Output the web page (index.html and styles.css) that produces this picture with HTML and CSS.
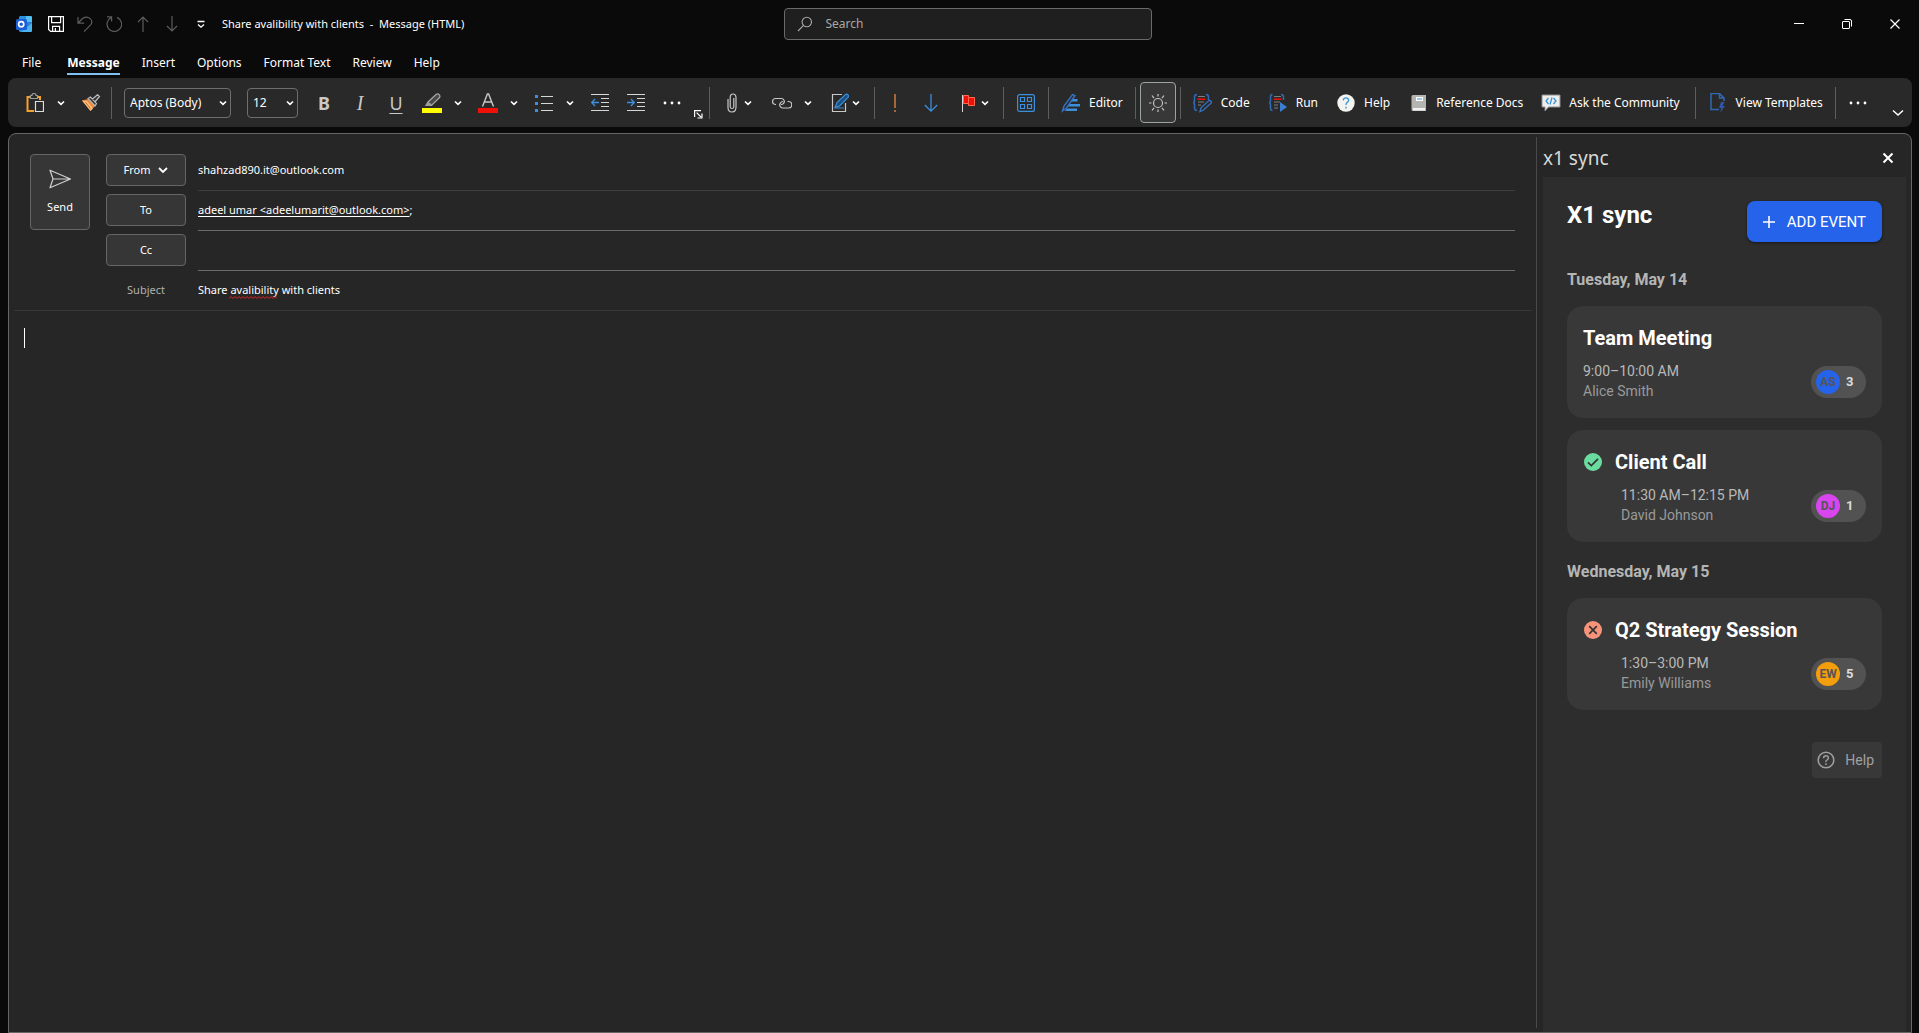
FILE: index.html
```html
<!DOCTYPE html>
<html lang="en">
<head>
<meta charset="utf-8">
<title>Share avalibility with clients - Message (HTML)</title>
<meta name="viewport" content="width=device-width, initial-scale=1">
<link rel="stylesheet" href="styles.css">
</head>
<body>
<svg class="defs" aria-hidden="true">
  <symbol id="chev" viewBox="0 0 8 8"><path d="M1 2.5 4 5.3 7 2.5" fill="none" stroke="currentColor" stroke-width="1.7"/></symbol>
  <symbol id="dots" viewBox="0 0 18 18"><g fill="currentColor"><circle cx="2" cy="9" r="1.4"/><circle cx="9" cy="9" r="1.4"/><circle cx="16" cy="9" r="1.4"/></g></symbol>
</svg>

<header class="titlebar">
  <div class="quick">
    <svg class="app-logo" width="16" height="16" viewBox="0 0 16 16"><path d="M3 1 4 0h11l1 1v14l-1 1H4l-1-1z" fill="#2b8fdc"/><path d="M10 0h5l1 1v5h-6z" fill="#50c0f5"/><path d="M10 6h6v6l-6 2z" fill="#2a7fd4"/><path d="m16 7-11 9h10l1-1z" fill="#4bb4ee"/><rect y="3" width="11" height="11" rx="1.5" fill="#1a5fd6"/><circle cx="5.2" cy="8.2" r="2.6" fill="none" stroke="#fff" stroke-width="1.6"/></svg>
    <button class="qbtn" aria-label="Save"><svg width="16" height="16" viewBox="0 0 16 16" fill="none" stroke="currentColor" stroke-width="1.2"><path d="M.6.6h14.8v14.8H2.6l-2-2zM3.6.6v6h9v-6M4.6 15.4v-5h7v5M7.4 12v3"/></svg></button>
    <button class="qbtn dim" aria-label="Undo"><svg width="16" height="16" viewBox="0 0 16 16" fill="none" stroke="currentColor" stroke-width="1.2"><path d="M1 1v6.2h6.2M1.2 7 5 3c3-3 7-2 8.600 0 1.600 2 1.400 4.500-.2 6.200L7 15.600"/></svg></button>
    <button class="qbtn dim" aria-label="Redo"><svg width="16" height="16" viewBox="0 0 16 16" fill="none" stroke="currentColor" stroke-width="1.200"><path d="M1 .8h4.600v4.600M11 1.400A7.300 7.300 0 1 1 5.200 1.600"/></svg></button>
    <button class="qbtn dim" aria-label="Previous item"><svg width="16" height="16" viewBox="0 0 16 16" fill="none" stroke="currentColor" stroke-width="1.200"><path d="M8 16V1M3 6l5-5 5 5"/></svg></button>
    <button class="qbtn dim" aria-label="Next item"><svg width="16" height="16" viewBox="0 0 16 16" fill="none" stroke="currentColor" stroke-width="1.200"><path d="M8 0v15M3 10l5 5 5-5"/></svg></button>
    <button class="qbtn" aria-label="Customize Quick Access Toolbar"><svg width="16" height="16" viewBox="0 0 16 16" fill="none" stroke="currentColor" stroke-width="1.300"><path d="M4.500 5.500h7M5 8.500l3 2.700 3-2.700"/></svg></button>
    <h1 class="doc-title">Share avalibility with clients&nbsp; -&nbsp; Message (HTML)</h1>
  </div>
  <label class="search">
    <svg width="16" height="16" viewBox="0 0 16 16" fill="none" stroke="currentColor" stroke-width="1.100"><circle cx="9.800" cy="6" r="4.700"/><path d="M6.500 9.400 1 15"/></svg>
    <input type="search" placeholder="Search" aria-label="Search">
  </label>
  <div class="window-controls">
    <button aria-label="Minimize"><svg width="12" height="12" viewBox="0 0 12 12"><path d="M1 5.500h10" stroke="currentColor"/></svg></button>
    <button aria-label="Restore"><svg width="12" height="12" viewBox="0 0 12 12" fill="none" stroke="currentColor"><rect x="1.500" y="3.500" width="7" height="7" rx=".5"/><path d="M3.500 1.500H9Q10.500 1.500 10.500 3v5.500"/></svg></button>
    <button aria-label="Close"><svg width="12" height="12" viewBox="0 0 12 12" stroke="currentColor" stroke-width="1.200"><path d="m1.500 1.500 9 9m0-9-9 9"/></svg></button>
  </div>
</header>

<nav class="tabs" aria-label="Ribbon tabs">
  <a href="#file">File</a>
  <a href="#message" class="active" aria-current="page">Message</a>
  <a href="#insert">Insert</a>
  <a href="#options">Options</a>
  <a href="#format">Format Text</a>
  <a href="#review">Review</a>
  <a href="#help">Help</a>
</nav>

<div class="ribbon" role="toolbar" aria-label="Message">
  <div class="split">
    <button class="icon" aria-label="Paste"><svg width="18" height="20" viewBox="0 0 18 20" fill="none"><path d="M5 4H1.500v14H8" stroke="#f5a22d" stroke-width="2"/><path d="M11 4h3v3" stroke="#f5a22d" stroke-width="2"/><path d="M4.500 5.500v-3H6q0-2 2-2t2 2h1.500v3z" stroke="#9a9a9a" stroke-width="1.200"/><path d="M9.500 8.500h8v10h-8z" fill="#292929" stroke="#ddd" stroke-width="1.200"/></svg></button>
    <button class="arrow" aria-label="Paste options"><svg width="8" height="8"><use href="#chev"/></svg></button>
  </div>
  <button class="icon" aria-label="Format Painter"><svg width="20" height="18" viewBox="0 0 20 18"><path d="M1 6.500 7.500 5l6.500 7-4.500 5z" fill="#f0883a"/><path d="m1 6.500 5 .5 6 7.500-2.500 2.500z" fill="#ffd9a0" opacity=".7"/><path d="m4.500 8.200 5 6.500" stroke="#d56a1c"/><path d="m7 4.500 2.500-1.500 6 6.500-1.500 2.500zM11 5.500l5.500-4.800 2 1.800-4.700 5.500" fill="#333" stroke="#bdbdbd" stroke-width="1.200"/></svg></button>
  <span class="sep"></span>
  <div class="combos">
    <span class="combo combo-font"><select aria-label="Font"><option>Aptos (Body)</option></select><svg width="8" height="8"><use href="#chev"/></svg></span>
    <span class="combo combo-size"><select aria-label="Font size"><option>12</option></select><svg width="8" height="8"><use href="#chev"/></svg></span>
  </div>
  <button class="icon glyph bold" aria-label="Bold">B</button>
  <button class="icon glyph italic" aria-label="Italic">I</button>
  <button class="icon glyph under" aria-label="Underline">U</button>
  <div class="split">
    <button class="icon" aria-label="Text highlight color"><svg width="20" height="20" viewBox="0 0 20 20"><path d="m6 9 8-7.500q2-1.200 3.300.3t0 3L9.500 12.500H4z" fill="#4a4a4a" stroke="#a8a8a8" stroke-width="1.200"/><path d="M6.500 9 3 13h5l2-1.500z" fill="#9b9b9b"/><path d="M0 15h20v5H0z" fill="#ff0"/></svg></button>
    <button class="arrow" aria-label="Highlight colors"><svg width="8" height="8"><use href="#chev"/></svg></button>
  </div>
  <div class="split">
    <button class="icon" aria-label="Font color"><svg width="20" height="20" viewBox="0 0 20 20"><path d="M4.500 13.500 9.400 1h1.200l4.900 12.500M6.400 9h7.200" fill="none" stroke="#c8c8c8" stroke-width="1.400"/><path d="M0 15h20v5H0z" fill="#f01008"/></svg></button>
    <button class="arrow" aria-label="Font colors"><svg width="8" height="8"><use href="#chev"/></svg></button>
  </div>
  <div class="split">
    <button class="icon" aria-label="Bullets"><svg width="18" height="18" viewBox="0 0 18 18"><path d="M0 1h3v3H0zm0 7h3v3H0zm0 7h3v3H0z" fill="#3b8fdc"/><path d="M6 2.500h12M6 9.500h12M6 16.500h12" stroke="#d6d6d6"/></svg></button>
    <button class="arrow" aria-label="Bullet library"><svg width="8" height="8"><use href="#chev"/></svg></button>
  </div>
  <button class="icon" aria-label="Decrease indent"><svg width="18" height="18" viewBox="0 0 18 18" fill="none"><path d="M0 .5h18M10 4.500h8M10 8.500h8M10 12.500h8M0 16.500h18" stroke="#d6d6d6"/><path d="M8 8.500H1M4 5 .7 8.500 4 12" stroke="#3b8fdc" stroke-width="1.300"/></svg></button>
  <button class="icon" aria-label="Increase indent"><svg width="18" height="18" viewBox="0 0 18 18" fill="none"><path d="M0 .5h18M10 4.500h8M10 8.500h8M10 12.500h8M0 16.500h18" stroke="#d6d6d6"/><path d="M0 8.500h7M4 5l3.300 3.500L4 12" stroke="#3b8fdc" stroke-width="1.300"/></svg></button>
  <button class="icon" aria-label="More formatting"><svg width="18" height="18"><use href="#dots"/></svg></button>
  <button class="launcher" aria-label="Text dialog"><svg width="9" height="9" viewBox="0 0 9 9" fill="none" stroke="currentColor" stroke-width="1.200"><path d="M.6 7V.6H7M2.600 2.600 7 7M8 3.500V8H3.500"/></svg></button>
  <span class="sep"></span>
  <div class="split tight">
    <button class="icon" aria-label="Attach file"><svg width="10" height="20" viewBox="0 0 10 20" fill="none" stroke="#c8c8c8" stroke-width="1.200"><path d="M6.800 5v9q-.3 1.500-1.800 1.500T3.200 14V4.500Q3.200 1 6 1t3 3.500v9.500Q9 19 5 19T1 14.500V6"/></svg></button>
    <button class="arrow" aria-label="Attach options"><svg width="8" height="8"><use href="#chev"/></svg></button>
  </div>
  <div class="split">
    <button class="icon" aria-label="Link"><svg width="20" height="12" viewBox="0 0 20 12" fill="none" stroke="#c8c8c8" stroke-width="1.200"><path d="M4 7.500H3.500a3 3 0 0 1 0-6H9a3 3 0 0 1 2.500 5Q10.700 7.500 9 7.500"/><path d="M15.500 4.500h1a3 3 0 0 1 0 6.500H11a3 3 0 0 1-2.500-5Q9.300 4.500 11 4.500"/></svg></button>
    <button class="arrow" aria-label="Link options"><svg width="8" height="8"><use href="#chev"/></svg></button>
  </div>
  <div class="split tight">
    <button class="icon" aria-label="Signature"><svg width="18" height="20" viewBox="0 0 18 20" fill="none"><path d="M11 1.500H1.500v17h13V10" stroke="#c8c8c8" stroke-width="1.200"/><path d="m4 14.500 2-5 8.500-8q1.500-.7 2.500.3t0 2.500L8.500 13z" fill="#1b4f80" stroke="#3b8fdc" stroke-width="1.200"/><path d="M4 15h9" stroke="#3b8fdc"/></svg></button>
    <button class="arrow" aria-label="Signature options"><svg width="8" height="8"><use href="#chev"/></svg></button>
  </div>
  <span class="sep"></span>
  <button class="icon" aria-label="High importance"><svg width="4" height="18" viewBox="0 0 4 18"><path d="M1 0h2v14H1zm0 16h2v2H1z" fill="#a5673a"/></svg></button>
  <button class="icon" aria-label="Low importance"><svg width="14" height="20" viewBox="0 0 14 20" fill="none" stroke="#3b8fdc" stroke-width="1.300"><path d="M7 1v17M.8 12 7 18.200 13.200 12"/></svg></button>
  <div class="split tight">
    <button class="icon" aria-label="Follow up"><svg width="14" height="18" viewBox="0 0 14 18"><path d="M1.500 1.500h5v2h6v8h-6v-2h-5z" fill="#f01008" stroke="#ff6a4d"/><path d="M6.500 3.500v6" stroke="#ff6a4d"/><path d="M.5 1v17" stroke="#d6d6d6"/></svg></button>
    <button class="arrow" aria-label="Follow up options"><svg width="8" height="8"><use href="#chev"/></svg></button>
  </div>
  <span class="sep"></span>
  <button class="icon wide" aria-label="Apps"><svg width="18" height="18" viewBox="0 0 18 18" fill="none" stroke="#3b8fdc" stroke-width="1.200"><rect x=".6" y=".6" width="16.800" height="16.800" rx="2"/><path d="M3.500 3.500h4v4h-4zm7 0h4v4h-4zm-7 7h4v4h-4zm7 0h4v4h-4z"/></svg></button>
  <span class="sep"></span>
  <button class="cmd"><svg width="20" height="20" viewBox="0 0 20 20"><path d="M9 6h7.500v2.500H9zM8 11h11v2.500H6zM6 15.500h10V18H4z" fill="#3b8fdc"/><path d="m1.500 18 1.500-5L11.500 1.500l2.500 1L5.500 15z" fill="#292929" stroke="#3573c4" stroke-width="1.400"/></svg>Editor</button>
  <span class="sep"></span>
  <button class="icon wide toggled" aria-label="Switch background" aria-pressed="true"><svg width="20" height="20" viewBox="0 0 20 20" fill="none" stroke="#c4c4c4" stroke-width="1.200"><circle cx="10" cy="10" r="4.500"/><path d="M10 1v2.500M10 16.500V19M1 10h2.500M16.500 10H19M4 2.500l2 2.700M14 14.800l2 2.700M4 17.500l2-2.700M14 5.200l2-2.700"/></svg></button>
  <span class="sep"></span>
  <div class="cmds">
    <button class="cmd"><svg width="20" height="20" viewBox="0 0 20 20" fill="none"><path d="M4 1.500q-2.500 0-2.500 2.500v4L.7 9.500l.8 1.500v4q0 2.500 2.500 2.500M13 1.500q2.500 0 2.500 2.500v3" stroke="#2f69b3" stroke-width="1.600"/><path d="M5 3.500h7M5 9h6M5 12h3" stroke="#7e7e7e"/><path d="M4.500 6.200h8" stroke="#f01008" stroke-width="1.500"/><path d="m7 18.500 1.200-4 8-7.200q2.300.2 2.300 2.500L10.500 17z" fill="#292929" stroke="#3573c4" stroke-width="1.300"/></svg>Code</button>
    <button class="cmd"><svg width="20" height="20" viewBox="0 0 20 20" fill="none"><path d="M4.500 1.500Q2.500 1.500 2.500 4v4L1.700 9.500l.8 1.500v4q0 2.500 2 2.500M13 1.500q2.500 0 2.500 2.500v3" stroke="#2f69b3" stroke-width="1.600"/><path d="M6 3.500h7M6 9h6M6 12h4M6 15h4" stroke="#7e7e7e"/><path d="M5.500 6.200h8" stroke="#f01008" stroke-width="1.500"/><path d="m12 9 7 5-7 5z" fill="#3b7fd4"/></svg>Run</button>
    <button class="cmd"><svg width="20" height="20" viewBox="0 0 20 20" fill="none"><circle cx="10" cy="10" r="8.700" fill="#f3f3f0"/><path d="M7.200 7.300Q7.500 4.800 10 4.800t2.700 2.300Q12.700 8.600 11 9.600 10 10.300 10 12" stroke="#3b96d6" stroke-width="1.300"/><path d="M10 13.800v1.600" stroke="#3b96d6" stroke-width="1.400"/></svg>Help</button>
    <button class="cmd"><svg width="20" height="20" viewBox="0 0 20 20"><path d="M5 2h13v16H5q-1.500 0-1.500-1.500v-13Q3.500 2 5 2z" fill="#b4b4b0"/><path d="M8 4h7v4H8z" fill="#fff"/><path d="M9 6h5" stroke="#3b8fdc"/><path d="M5 15h12v2.500H5z" fill="#f3f3f3"/></svg>Reference Docs</button>
    <button class="cmd"><svg width="20" height="20" viewBox="0 0 20 20" fill="none"><path d="M1 2h18v12H7.500L4 18v-4H1z" fill="#eee" stroke="#8d8d8d"/><path d="M7.500 5 5 8l2.500 3M12.500 5 15 8l-2.500 3M11 4.500l-2 7" stroke="#3b96d6" stroke-width="1.300"/></svg>Ask the Community</button>
  </div>
  <span class="sep"></span>
  <button class="cmd"><svg width="20" height="20" viewBox="0 0 20 20" fill="none"><path d="M11 16.500H3v-16h8.500L16 5v3M11.500.5V5H16" stroke="#2f69b3" stroke-width="1.500"/><path d="m13 9-2 6h2.500l-1.500 5 5-7h-2.500L16.500 9z" fill="#2f56a8"/></svg>View Templates</button>
  <span class="sep"></span>
  <button class="icon wide" aria-label="More commands"><svg width="18" height="18"><use href="#dots"/></svg></button>
  <button class="collapse" aria-label="Ribbon display options"><svg width="12" height="8" viewBox="0 0 12 8" fill="none" stroke="currentColor" stroke-width="1.500"><path d="m1 1.500 5 4.500 5-4.500"/></svg></button>
</div>

<main class="frame">
  <section class="compose" aria-label="Message">
    <form class="headers">
      <button type="button" class="box send"><svg width="24" height="20" viewBox="0 0 24 20" fill="none" stroke="#d0d0d0" stroke-width="1.200" stroke-linejoin="round"><path d="M2 1.200 22.500 10 2 18.800 5 10zM5 10h17"/></svg>Send</button>
      <div class="rows">
        <div class="row faint"><button type="button" class="box">From<svg width="10" height="10" viewBox="0 0 10 10" fill="none" stroke="currentColor" stroke-width="1.800"><path d="m1 3 4 4 4-4"/></svg></button><span>shahzad890.it@outlook.com</span></div>
        <div class="row"><button type="button" class="box">To</button><span><a href="mailto:adeelumarit@outlook.com">adeel umar &lt;adeelumarit@outlook.com&gt;</a>;</span><input type="text" aria-label="To"></div>
        <div class="row"><button type="button" class="box">Cc</button><input type="text" aria-label="Cc"></div>
        <div class="row last"><label for="subject">Subject</label><div class="subject"><input id="subject" type="text" value="Share avalibility with clients" spellcheck="false"><svg class="misspelled" width="48" height="3" viewBox="0 0 48 3" fill="none" stroke="#e02020" aria-hidden="true"><path d="m0 2.500 2-2 2 2 2-2 2 2 2-2 2 2 2-2 2 2 2-2 2 2 2-2 2 2 2-2 2 2 2-2 2 2 2-2 2 2 2-2 2 2 2-2 2 2 2-2 2 2"/></svg></div></div>
      </div>
    </form>
    <div class="editor"><textarea aria-label="Message body"></textarea><span class="caret"></span></div>
  </section>

  <aside class="pane" aria-label="x1 sync">
    <header class="pane-head"><h2>x1 sync</h2><button aria-label="Close pane"><svg width="12" height="12" viewBox="0 0 12 12" stroke="currentColor" stroke-width="2"><path d="m1.500 1.500 9 9m0-9-9 9"/></svg></button></header>
    <div class="addin">
      <div class="addin-top">
        <h2>X1 sync</h2>
        <button class="add"><svg width="12" height="12" viewBox="0 0 12 12" stroke="currentColor" stroke-width="1.600"><path d="M6 0v12M0 6h12"/></svg>ADD EVENT</button>
      </div>
      <h3>Tuesday, May 14</h3>
      <article class="card">
        <h4>Team Meeting</h4>
        <div class="details"><p>9:00–10:00 AM<br><span>Alice Smith</span></p><div class="chip"><b class="avatar blue">AS</b><b>3</b></div></div>
      </article>
      <article class="card marked">
        <h4><svg width="20" height="20" viewBox="0 0 20 20"><circle cx="10" cy="10" r="9" fill="#6bdc9f"/><path d="m5 10.300 3.300 3.200L15 6.800" fill="none" stroke="#333" stroke-width="1.700"/></svg>Client Call</h4>
        <div class="details"><p>11:30 AM–12:15 PM<br><span>David Johnson</span></p><div class="chip"><b class="avatar pink">DJ</b><b>1</b></div></div>
      </article>
      <h3>Wednesday, May 15</h3>
      <article class="card marked">
        <h4><svg width="20" height="20" viewBox="0 0 20 20"><circle cx="10" cy="10" r="9" fill="#f7937a"/><path d="m6.200 6.200 7.600 7.600m0-7.600-7.600 7.600" stroke="#333" stroke-width="1.700"/></svg>Q2 Strategy Session</h4>
        <div class="details"><p>1:30–3:00 PM<br><span>Emily Williams</span></p><div class="chip"><b class="avatar amber">EW</b><b>5</b></div></div>
      </article>
      <button class="help"><svg width="18" height="18" viewBox="0 0 18 18" fill="none" stroke="currentColor" stroke-width="1.500"><circle cx="9" cy="9" r="7.800"/><path d="M6.500 7.200Q6.700 4.800 9 4.800t2.400 2.200Q11.400 8 10 9T9 11M9 12.300v1.700"/></svg>Help</button>
    </div>
  </aside>
</main>
</body>
</html>
```
FILE: styles.css
```css
* { box-sizing: border-box; }

body {
  margin: 0;
  min-height: 100vh;
  display: flex;
  flex-direction: column;
  background: #0a0a0a;
  color: #fff;
  font: 12px/16px "Noto Sans", "Open Sans", sans-serif;
}

button, input, select, textarea {
  margin: 0;
  padding: 0;
  border: 0;
  background: none;
  color: inherit;
  font: inherit;
  outline: 0;
}

h1, h2, h3, h4, p { margin: 0; }
svg { display: block; flex: none; }
.defs { position: absolute; width: 0; height: 0; }

/* Title bar */
.titlebar { display: flex; align-items: center; height: 48px; padding-left: 16px; }
.quick { flex: 1 1 0; min-width: 0; display: flex; align-items: center; gap: 13px; }
.app-logo { margin-right: 3px; }
.qbtn.dim { color: #5c5c5c; }
.doc-title { font-size: 11px; font-weight: 400; white-space: nowrap; }
.search {
  flex: 0 1 368px;
  display: flex;
  align-items: center;
  gap: 13px;
  height: 32px;
  padding: 0 12px;
  border: 1px solid #6a6a6a;
  border-radius: 4px;
  background: #1f1f1f;
  color: #a8a8a8;
}
.search input { flex: 1; min-width: 0; }
.search input::placeholder { color: #a8a8a8; opacity: 1; }
.window-controls { flex: 1 1 0; display: flex; justify-content: flex-end; }
.window-controls button { width: 48px; height: 48px; display: grid; place-items: center; }

/* Ribbon tabs */
.tabs { display: flex; align-items: flex-end; gap: 22px; height: 30px; padding: 0 0 3px 22px; }
.tabs a { color: inherit; text-decoration: none; line-height: 20px; border-bottom: 2px solid transparent; }
.tabs .active { margin-left: 4px; font-weight: 700; border-color: #7fc0f5; }

/* Ribbon */
.ribbon {
  display: flex;
  align-items: center;
  gap: 4px;
  height: 49px;
  margin: 0 7px 6px 8px;
  padding: 0 8px 0 11px;
  border-radius: 8px;
  background: #292929;
  white-space: nowrap;
}
.icon { width: 32px; height: 32px; display: grid; place-items: center; }
.wide { width: 36px; }
.arrow { width: 20px; height: 32px; display: grid; place-items: center; }
.split { display: flex; }
.tight { margin: 0 10px 0 6px; }
.tight .icon { width: 24px; }
.tight .arrow { width: 8px; }
.sep { width: 1px; height: 32px; background: #5e5e5e; }
.combos { display: flex; gap: 16px; margin: 0 6px 0 8px; }
.combo {
  display: flex;
  align-items: center;
  height: 30px;
  padding: 0 3px 0 5px;
  border: 1px solid #6e6e6e;
  border-radius: 4px;
}
.combo select { flex: 1; min-width: 0; appearance: none; }
.combo-font { width: 107px; }
.combo-size { width: 51px; }
.glyph { color: #c8c8c8; font-size: 18px; }
.bold { font-weight: 700; }
.italic { font-family: "Liberation Serif", serif; font-style: italic; font-size: 20px; }
.under { text-decoration: underline; text-decoration-thickness: 1px; text-underline-offset: 3px; }
.launcher { width: 13px; padding-left: 2px; align-self: flex-end; margin-bottom: 8px; }
.cmds { display: flex; gap: 2px; margin-right: 3px; }
.cmd { display: flex; align-items: center; gap: 8px; height: 32px; padding: 0 8px; }
.toggled { height: 41px; border: 1px solid #9ba5a0; border-radius: 4px; background: #383838; }
.collapse { align-self: flex-end; margin: 0 0 10px auto; }

/* Window body */
.frame {
  flex: 1;
  display: flex;
  margin: 0 7px 0 8px;
  border: 1px solid #666;
  border-radius: 8px 8px 0 0;
  background: #262626;
}
.compose { flex: 1; min-width: 0; display: flex; flex-direction: column; padding: 0 4px 0 5px; }
.headers { display: flex; gap: 16px; padding: 17px 17px 0 16px; border-bottom: 1px solid #383838; font-size: 11px; }
.box {
  display: flex;
  align-items: center;
  justify-content: center;
  gap: 8px;
  border: 1px solid #666;
  border-radius: 4px;
  background: #363636;
}
.send { flex-direction: column; gap: 10px; width: 60px; height: 76px; margin-top: 3px; }
.rows { flex: 1; min-width: 0; }
.row {
  display: flex;
  align-items: center;
  gap: 12px;
  height: 40px;
  padding-bottom: 2px;
  background: linear-gradient(#6b6b6b, #6b6b6b) 92px 100% / 100% 1px no-repeat;
}
.row.faint { background-image: linear-gradient(#3e3e3e, #3e3e3e); }
.row.last { height: 39px; background: none; }
.row > .box, .row > label { width: 80px; height: 32px; flex: none; }
.row > label { line-height: 32px; text-align: center; color: #b0b0b0; }
.row > span { white-space: nowrap; }
.row input { flex: 1; min-width: 0; height: 32px; }
.row a { color: inherit; text-underline-offset: 2px; }
.subject { position: relative; display: flex; flex: 1; }
.misspelled { position: absolute; left: 31px; top: 22px; }
.editor { flex: 1; position: relative; display: flex; }
.editor textarea { flex: 1; resize: none; padding: 16px 10px; font-size: 16px; }
.caret { position: absolute; left: 10px; top: 17px; width: 1px; height: 20px; background: #fff; }

/* Add-in task pane */
.pane {
  width: 375px;
  display: flex;
  flex-direction: column;
  padding: 0 5px 0 7px;
  background: linear-gradient(#4a4a4a, #4a4a4a) 0 3px / 1px calc(100% - 7px) no-repeat;
}
.pane-head { display: flex; align-items: center; justify-content: space-between; height: 43px; padding: 4px 12px 0 0; }
.pane-head h2 { font-size: 19px; line-height: 28px; font-weight: 400; color: #d8d8d8; }
.addin {
  flex: 1;
  display: flex;
  flex-direction: column;
  padding: 24px;
  background: #2d2d2d;
  font: 14px/20px Roboto, sans-serif;
}
.addin-top { display: flex; justify-content: space-between; margin-bottom: 26px; }
.addin-top h2 { font-size: 24px; line-height: 28px; }
.add {
  display: flex;
  align-items: center;
  gap: 12px;
  height: 41px;
  padding: 0 16px;
  border-radius: 8px;
  background: #2563eb;
  box-shadow: 0 1px 3px rgba(0, 0, 0, .5);
  font-size: 15px;
}
.addin h3 { margin-bottom: 14px; font-size: 16px; line-height: 24px; color: #b5b5b5; }
.card { height: 112px; margin-bottom: 12px; padding: 18px 16px; border-radius: 16px; background: #383838; }
.card + h3 { margin-top: 6px; }
.card h4 { display: flex; align-items: center; gap: 12px; font-size: 20px; line-height: 28px; }
.details { display: flex; justify-content: space-between; align-items: center; margin-top: 9px; color: #b8b8b8; }
.details span { color: #9a9a9a; }
.marked .details { padding-left: 38px; }
.chip { display: flex; align-items: center; gap: 6px; width: 55px; height: 32px; margin-top: 2px; padding-left: 5px; border-radius: 16px; background: #525252; color: #ddd; font-size: 13px; }
.avatar { width: 24px; height: 24px; border-radius: 50%; line-height: 24px; text-align: center; font-size: 12px; color: #555; }
.blue { background: #2563eb; }
.pink { background: #d946ef; }
.amber { background: #f59e0b; }
.help {
  align-self: flex-end;
  display: flex;
  align-items: center;
  gap: 10px;
  height: 36px;
  margin-top: 20px;
  padding: 0 8px 0 5px;
  border-radius: 4px;
  background: #383838;
  color: #a0a0a0;
}
```
